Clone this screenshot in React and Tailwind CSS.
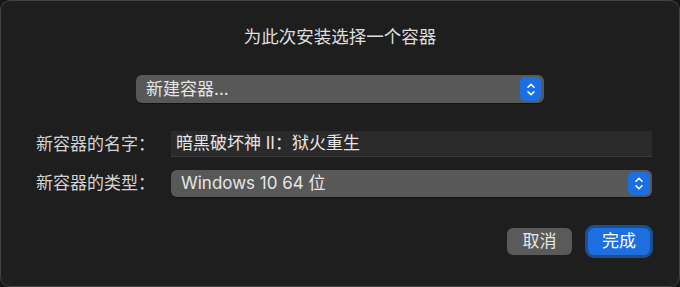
import React from 'react';

const font = { fontFamily: '"Inter", "Noto Sans CJK SC", sans-serif' };

function Stepper({ className }) {
  return (
    <div className={`flex items-center justify-center rounded-[5px] bg-[#1c6fe3] ${className}`}>
      <svg width="10" height="15" viewBox="0 0 10 15" fill="none" stroke="white" strokeWidth="1.6" strokeLinecap="round" strokeLinejoin="round">
        <path d="M2 5.2 L5 2.2 L8 5.2" />
        <path d="M2 9.8 L5 12.8 L8 9.8" />
      </svg>
    </div>
  );
}

export default function App() {
  return (
    <div className="h-[287px] w-[680px] bg-[#151515]" style={font}>
      <div className="flex h-full flex-col rounded-[10px] border border-[#434343] bg-[#1e1e1e]">
        {/* Title */}
        <div className="pt-[24px] text-center text-[17.5px] leading-6 text-[#dedede]">
          为此次安装选择一个容器
        </div>

        {/* Container popup */}
        <div className="mt-[26px] flex justify-center">
          <div className="flex h-[28px] w-[408px] items-center justify-between rounded-[6px] bg-[#585858] pl-[10px] pr-[3px] shadow-[0_1px_0_rgba(0,0,0,0.4)]">
            <span className="text-[17px] leading-none text-[#e6e6e6]">新建容器...</span>
            <Stepper className="h-[24px] w-[21px]" />
          </div>
        </div>

        {/* Form */}
        <div className="mt-[28px] flex flex-col gap-[13px] pl-[35px] pr-[27px]">
          <div className="flex items-center">
            <div className="w-[135px] text-[17px] leading-none text-[#d4d4d4]">新容器的名字：</div>
            <div className="flex h-[26px] flex-1 items-center border-b border-[#3a3a3a] bg-[#2a2a2a] pl-[5px] text-[17px] leading-none text-[#e6e6e6]">
              暗黑破坏神 II：狱火重生
            </div>
          </div>
          <div className="flex items-center">
            <div className="w-[135px] text-[17px] leading-none text-[#d4d4d4]">新容器的类型：</div>
            <div className="flex h-[27px] flex-1 items-center justify-between rounded-[6px] bg-[#585858] pl-[10px] pr-[2px] shadow-[0_1px_0_rgba(0,0,0,0.4)]">
              <span className="text-[17px] leading-none text-[#e6e6e6]">Windows 10 64 位</span>
              <Stepper className="h-[23px] w-[22px]" />
            </div>
          </div>
        </div>

        {/* Buttons */}
        <div className="mt-[31px] flex justify-end gap-[16px] pr-[29px]">
          <button className="h-[27px] w-[65px] rounded-[6px] bg-[#5a5a5a] text-[17px] leading-none text-[#e8e8e8]">
            取消
          </button>
          <button className="h-[27px] w-[62px] rounded-[6px] bg-[#1d6fe0] text-[17px] leading-none text-white ring-[3px] ring-[#17518f]">
            完成
          </button>
        </div>
      </div>
    </div>
  );
}
